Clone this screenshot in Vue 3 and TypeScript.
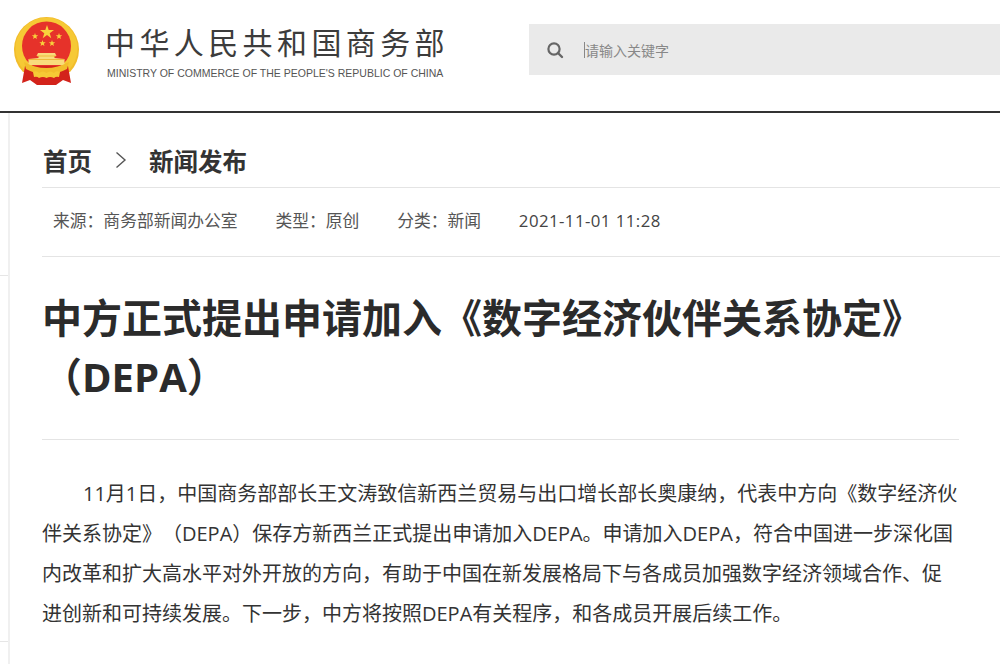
<script setup lang="ts">
const meta: { label: string; value: string }[] = [
  { label: '来源：', value: '商务部新闻办公室' },
  { label: '类型：', value: '原创' },
  { label: '分类：', value: '新闻' }
]
</script>

<template>
  <div class="page">
    <header class="topbar">
      <div class="brand">
        <svg class="emblem" viewBox="14 17 66 69" width="66" height="69">
          <!-- outer ring -->
          <path d="M23 72 A32.5 32.5 0 1 1 70 72 Z" fill="#f2bd2c" />
          <path d="M25 71 A31 31 0 1 1 68 71 Z" fill="#f6c935" />
          <circle cx="46.5" cy="46" r="24.5" fill="#e6322a" />
          <!-- stars -->
          <polygon points="47,25 48.7,30 54,30 49.7,33.2 51.3,38.2 47,35.1 42.7,38.2 44.3,33.2 40,30 45.3,30" fill="#f8d23c" />
          <polygon points="35,33 35.8,35.3 38.2,35.3 36.3,36.8 37,39.1 35,37.7 33,39.1 33.7,36.8 31.8,35.3 34.2,35.3" fill="#f8d23c" />
          <polygon points="59,33 59.8,35.3 62.2,35.3 60.3,36.8 61,39.1 59,37.7 57,39.1 57.7,36.8 55.8,35.3 58.2,35.3" fill="#f8d23c" />
          <polygon points="42.5,40 43.3,42.3 45.7,42.3 43.8,43.8 44.5,46.1 42.5,44.7 40.5,46.1 41.2,43.8 39.3,42.3 41.7,42.3" fill="#f8d23c" />
          <polygon points="52,40 52.8,42.3 55.2,42.3 53.3,43.8 54,46.1 52,44.7 50,46.1 50.7,43.8 48.8,42.3 51.2,42.3" fill="#f8d23c" />
          <!-- gate -->
          <path d="M38 53 h17 l1.5 3 h-2 v2 l10 1 v6 h-36 v-6 l10 -1 v-2 h-2 Z" fill="#f9dc7c" />
          <path d="M37 56 h19 M29 59.5 h35" stroke="#eeb12a" stroke-width="0.8" fill="none" />
          <!-- ribbon -->
          <path d="M25 66 L22 83 L30 80 L37 85 L56 85 L63 80 L71 83 L68 66 Z" fill="#d3231b" />
          <!-- wreath lower edge and swags -->
          <path d="M24 62 Q46 74 69 62 L67 69 Q46 80 26 69 Z" fill="#f2bd2c" />
          <path d="M33 72 q4 -2 6 1 q4 -3 7.5 0 q3.5 -3 7.5 0 q2 -3 6 -1 l-1 5 q-3 -1 -5 1 q-4 -2 -7.5 0 q-3.5 -2 -7.5 0 q-2 -2 -5 -1 Z" fill="#f6c935" />
        </svg>
        <div class="brand-text">
          <div class="brand-cn">中华人民共和国商务部</div>
          <div class="brand-en">MINISTRY OF COMMERCE OF THE PEOPLE'S REPUBLIC OF CHINA</div>
        </div>
      </div>
      <div class="search">
        <svg class="search-icon" viewBox="0 0 18 18" width="18" height="18">
          <circle cx="8" cy="8" r="5.6" fill="none" stroke="#666" stroke-width="2.2" />
          <path d="M12 12 L16 16" stroke="#666" stroke-width="2.4" stroke-linecap="round" />
        </svg>
        <span class="caret"></span>
        <span class="placeholder">请输入关键字</span>
      </div>
    </header>

    <div class="body">
      <aside class="rail">
        <div class="rail-tick"></div>
        <div class="rail-tick second"></div>
      </aside>
      <main class="content">
        <nav class="crumbs">
          <span>首页</span>
          <svg class="chevron" viewBox="0 0 12 18" width="12" height="18">
            <path d="M1.5 1.5 L10 9 L1.5 16.5" fill="none" stroke="#555" stroke-width="1.4" />
          </svg>
          <span>新闻发布</span>
        </nav>
        <div class="meta">
          <span v-for="m in meta" :key="m.label" class="meta-item">{{ m.label }}{{ m.value }}</span>
          <span class="meta-date">2021-11-01 11:28</span>
        </div>
        <article class="article">
          <h1 class="title">中方正式提出申请加入《数字经济伙伴关系协定》（DEPA）</h1>
          <p class="para">11月1日，中国商务部部长王文涛致信新西兰贸易与出口增长部长奥康纳，代表中方向《数字经济伙伴关系协定》（DEPA）保存方新西兰正式提出申请加入DEPA。申请加入DEPA，符合中国进一步深化国内改革和扩大高水平对外开放的方向，有助于中国在新发展格局下与各成员加强数字经济领域合作、促进创新和可持续发展。下一步，中方将按照DEPA有关程序，和各成员开展后续工作。</p>
        </article>
      </main>
    </div>
  </div>
</template>

<style scoped>
.page {
  width: 1000px;
  height: 664px;
  overflow: hidden;
  background: #fff;
  color: #333;
  font-family: "Open Sans", "Noto Sans CJK SC", sans-serif;
}

.topbar {
  display: flex;
  height: 111px;
  border-bottom: 2px solid #333;
  box-sizing: content-box;
}

.brand {
  display: flex;
  width: 529px;
  padding: 17px 0 0 14px;
  box-sizing: border-box;
}

.emblem {
  flex: none;
}

.brand-text {
  margin-left: 25px;
  padding-top: 8px;
}

.brand-cn {
  font-size: 30px;
  line-height: 36px;
  letter-spacing: 4.4px;
  color: #3c3c3c;
  white-space: nowrap;
}

.brand-en {
  margin-top: 5px;
  padding-left: 2px;
  font-family: "Liberation Sans", sans-serif;
  font-size: 10.5px;
  line-height: 14px;
  color: #555;
  white-space: nowrap;
}

.search {
  display: flex;
  align-items: center;
  flex: 1;
  height: 51px;
  margin-top: 24px;
  padding-left: 17px;
  background: #eaeaea;
}

.caret {
  width: 1px;
  height: 16px;
  margin-left: 20px;
  background: #888;
}

.placeholder {
  font-size: 14px;
  color: #888;
}

.body {
  display: flex;
}

.rail {
  flex: none;
  width: 8px;
  height: 551px;
  border-right: 2px solid #f0f0f0;
}

.rail-tick {
  height: 1px;
  margin-top: 162px;
  background: #e6e6e6;
}

.rail-tick.second {
  margin-top: 365px;
}

.content {
  flex: 1;
  min-width: 0;
  margin-left: 32px;
}

.crumbs {
  display: flex;
  align-items: center;
  gap: 22.5px;
  height: 75px;
  padding: 20px 0 0 1px;
  box-sizing: border-box;
  border-bottom: 1px solid #e4e4e4;
  font-size: 24.5px;
  font-weight: 700;
  color: #333;
}

.meta {
  display: flex;
  align-items: center;
  height: 69px;
  padding: 0 0 4px 11px;
  box-sizing: border-box;
  border-bottom: 1px solid #e4e4e4;
  font-size: 16.8px;
  color: #555;
}

.meta-item {
  margin-right: 37.8px;
}

.meta-date {
  letter-spacing: 0.45px;
  color: #444;
}

.article {
  width: 917px;
}

.title {
  margin: 0;
  padding: 31px 0 33px;
  border-bottom: 1px solid #e4e4e4;
  font-size: 40px;
  line-height: 59px;
  font-weight: 700;
  color: #2b2b2b;
}

.para {
  margin: 34px 0 0;
  font-size: 20px;
  line-height: 40px;
  text-indent: 41px;
  text-spacing-trim: space-all;
  color: #333;
}
</style>

<style>
html,
body {
  margin: 0;
  background: #fff;
}
</style>
